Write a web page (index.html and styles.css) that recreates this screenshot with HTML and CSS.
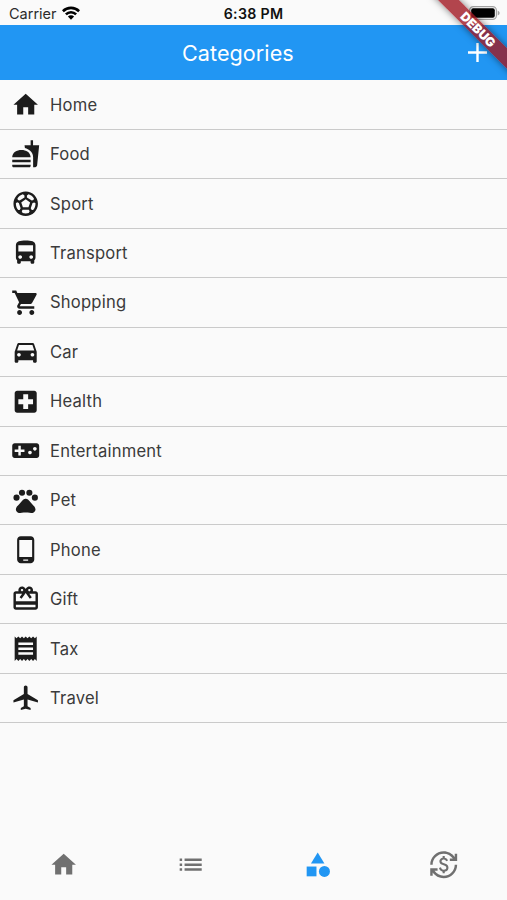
FILE: index.html
```html
<!DOCTYPE html>
<html lang="en">
<head>
<meta charset="utf-8">
<title>Categories</title>
<link rel="stylesheet" href="styles.css">
</head>
<body>
<div class="app">
  <div class="status">
    <div class="carrier"><span>Carrier</span>
      <svg class="wifi" viewBox="0 0 18 14"><g fill="none" stroke="#000" stroke-width="2.6"><path d="M.9 5.2a11.6 11.6 0 0 1 16.2 0"/><path d="M3.9 8.4a7.2 7.2 0 0 1 10.2 0"/></g><path d="M9 13.8 5.9 10.6a4.4 4.4 0 0 1 6.2 0z"/></svg>
    </div>
    <div class="time">6:38 PM</div>
    <svg class="battery" viewBox="0 0 31 14"><rect x=".6" y=".6" width="26.8" height="12.8" rx="3.8" fill="none" stroke="#a2a2a2" stroke-width="1.2"/><rect x="2.2" y="2.2" width="23.6" height="9.6" rx="2" fill="#000"/><path d="M28.7 4.4q2 1 2 2.6t-2 2.6z" fill="#a2a2a2"/></svg>
  </div>
  <header class="bar">
    <h1>Categories</h1>
    <svg class="add" viewBox="0 0 19 19"><path d="M9.5 0v19M0 9.5h19" stroke="#fff" stroke-width="2.4"/></svg>
  </header>
  <ul class="list">
    <li><svg viewBox="0 0 24 24"><path d="M10 20v-6h4v6h5v-8h3L12 3 2 12h3v8z"/></svg><span>Home</span></li>
    <li><svg viewBox="0 0 24 24"><path d="M18.06 22.99h1.66c.84 0 1.53-.64 1.63-1.46L23 5.05h-5V1h-1.97v4.05h-4.97l.3 2.34c1.71.47 3.31 1.32 4.27 2.26 1.44 1.42 2.43 2.89 2.43 5.29v8.05zM1 21.99V21h15.03v.99c0 .55-.45 1-1.01 1H2.01c-.56 0-1.01-.45-1.01-1zm15.03-7c0-8-15.03-8-15.03 0h15.03zM1.02 17h15v2h-15z"/></svg><span>Food</span></li>
    <li><svg viewBox="0 0 24 24"><path d="M12 2C6.48 2 2 6.48 2 12c0 5.52 4.48 10 10 10s10-4.48 10-10C22 6.48 17.52 2 12 2zm1 3.3l1.35-.95c1.82.56 3.37 1.76 4.38 3.34l-.39 1.34-1.35.46L13 6.9V5.3zm-3.35-.95L11 5.3v1.6L7.01 9.49l-1.35-.46-.39-1.34c1.01-1.57 2.56-2.77 4.38-3.34zM7.08 17.11l-1.14.1C4.73 15.81 4 13.99 4 12c0-.12.01-.23.02-.35l1-.73 1.38.48 1.46 4.34-.78 1.37zm7.42 2.48c-.79.26-1.63.41-2.5.41s-1.71-.15-2.5-.41l-.69-1.49.64-1.1h5.11l.64 1.11-.7 1.48zM14.27 15H9.73l-1.35-4.02L12 8.44l3.63 2.54L14.27 15zm3.79 2.21l-1.14-.1-.79-1.37 1.46-4.34 1.39-.47 1 .73c.01.11.02.22.02.34 0 1.99-.73 3.81-1.94 5.21z"/></svg><span>Sport</span></li>
    <li><svg viewBox="0 0 24 24"><path d="M4 16c0 .88.39 1.67 1 2.22V20c0 .55.45 1 1 1h1c.55 0 1-.45 1-1v-1h8v1c0 .55.45 1 1 1h1c.55 0 1-.45 1-1v-1.78c.61-.55 1-1.34 1-2.22V6c0-3.5-3.58-4-8-4s-8 .5-8 4v10zm3.5 1c-.83 0-1.5-.67-1.5-1.5S6.67 14 7.5 14s1.5.67 1.5 1.5S8.33 17 7.5 17zm9 0c-.83 0-1.5-.67-1.5-1.5s.67-1.5 1.5-1.5 1.5.67 1.5 1.5-.67 1.5-1.5 1.5zm1.5-6H6V6h12v5z"/></svg><span>Transport</span></li>
    <li><svg viewBox="0 0 24 24"><path d="M7 18c-1.1 0-1.99.9-1.99 2S5.9 22 7 22s2-.9 2-2-.9-2-2-2zM1 2v2h2l3.6 7.59-1.35 2.45c-.16.28-.25.61-.25.96 0 1.1.9 2 2 2h12v-2H7.42c-.14 0-.25-.11-.25-.25l.03-.12.9-1.63h7.45c.75 0 1.41-.41 1.75-1.03l3.58-6.49c.08-.14.12-.31.12-.48 0-.55-.45-1-1-1H5.21l-.94-2H1zm16 16c-1.1 0-1.99.9-1.99 2s.89 2 1.99 2 2-.9 2-2-.9-2-2-2z"/></svg><span>Shopping</span></li>
    <li><svg viewBox="0 0 24 24"><path d="M18.92 6.01C18.72 5.42 18.16 5 17.5 5h-11c-.66 0-1.21.42-1.42 1.01L3 12v8c0 .55.45 1 1 1h1c.55 0 1-.45 1-1v-1h12v1c0 .55.45 1 1 1h1c.55 0 1-.45 1-1v-8l-2.08-5.99zM6.5 16c-.83 0-1.5-.67-1.5-1.5S5.67 13 6.5 13s1.5.67 1.5 1.5S7.33 16 6.5 16zm11 0c-.83 0-1.5-.67-1.5-1.5s.67-1.5 1.5-1.5 1.5.67 1.5 1.5-.67 1.5-1.5 1.5zM5 11l1.5-4.5h11L19 11H5z"/></svg><span>Car</span></li>
    <li><svg viewBox="0 0 24 24"><path d="M19 3H5c-1.1 0-1.99.9-1.99 2L3 19c0 1.1.9 2 2 2h14c1.1 0 2-.9 2-2V5c0-1.1-.9-2-2-2zm-1 11h-4v4h-4v-4H6v-4h4V6h4v4h4v4z"/></svg><span>Health</span></li>
    <li><svg viewBox="0 0 24 24"><path d="M21 6H3c-1.1 0-2 .9-2 2v8c0 1.1.9 2 2 2h18c1.1 0 2-.9 2-2V8c0-1.1-.9-2-2-2zm-10 7H8v3H6v-3H3v-2h3V8h2v3h3v2zm4.5 2c-.83 0-1.5-.67-1.5-1.5s.67-1.5 1.5-1.5 1.5.67 1.5 1.5-.67 1.5-1.5 1.5zm4-3c-.83 0-1.5-.67-1.5-1.5S18.67 9 19.5 9s1.5.67 1.5 1.5-.67 1.5-1.5 1.5z"/></svg><span>Entertainment</span></li>
    <li><svg viewBox="0 0 24 24"><circle cx="4.5" cy="9.5" r="2.5"/><circle cx="9" cy="5.5" r="2.5"/><circle cx="15" cy="5.5" r="2.5"/><circle cx="19.5" cy="9.5" r="2.5"/><path d="M17.34 14.86c-.87-1.02-1.6-1.89-2.48-2.91-.46-.54-1.05-1.08-1.75-1.32-.11-.04-.22-.07-.33-.09-.25-.04-.52-.04-.78-.04s-.53 0-.79.05c-.11.02-.22.05-.33.09-.7.24-1.28.78-1.75 1.32-.87 1.02-1.6 1.89-2.48 2.91-1.31 1.31-2.92 2.76-2.62 4.79.29 1.02 1.02 2.03 2.33 2.32.73.15 3.06-.44 5.54-.44h.18c2.48 0 4.81.58 5.54.44 1.31-.29 2.04-1.31 2.33-2.32.31-2.04-1.3-3.49-2.61-4.8z"/></svg><span>Pet</span></li>
    <li><svg viewBox="0 0 24 24"><path d="M16 1H8C6.34 1 5 2.34 5 4v16c0 1.66 1.34 3 3 3h8c1.66 0 3-1.34 3-3V4c0-1.66-1.34-3-3-3zm-2 20h-4v-1h4v1zm3.25-3H6.75V4h10.5v14z"/></svg><span>Phone</span></li>
    <li><svg viewBox="0 0 24 24"><path d="M20 6h-2.18c.11-.31.18-.65.18-1 0-1.66-1.34-3-3-3-1.05 0-1.96.54-2.5 1.35l-.5.67-.5-.68C10.96 2.54 10.05 2 9 2 7.34 2 6 3.34 6 5c0 .35.07.69.18 1H4c-1.11 0-1.99.89-1.99 2L2 19c0 1.11.89 2 2 2h16c1.11 0 2-.89 2-2V8c0-1.11-.89-2-2-2zm-5-2c.55 0 1 .45 1 1s-.45 1-1 1-1-.45-1-1 .45-1 1-1zM9 4c.55 0 1 .45 1 1s-.45 1-1 1-1-.45-1-1 .45-1 1-1zm11 15H4v-2h16v2zm0-5H4V8h5.08L7 10.83 8.62 12 11 8.76l1-1.36 1 1.36L15.38 12 17 10.83 14.92 8H20v6z"/></svg><span>Gift</span></li>
    <li><svg viewBox="0 0 24 24"><path d="M18 17H6v-2h12v2zm0-4H6v-2h12v2zm0-4H6V7h12v2zM3 22l1.5-1.5L6 22l1.5-1.5L9 22l1.5-1.5L12 22l1.5-1.5L15 22l1.5-1.5L18 22l1.5-1.5L21 22V2l-1.5 1.5L18 2l-1.5 1.5L15 2l-1.5 1.5L12 2l-1.5 1.5L9 2 7.5 3.5 6 2 4.5 3.5 3 2v20z"/></svg><span>Tax</span></li>
    <li><svg viewBox="0 0 24 24"><path d="M22 16v-2l-8.5-5V3.5c0-.83-.67-1.5-1.5-1.5s-1.5.67-1.5 1.5V9L2 14v2l8.5-2.5V19L8 20.5V22l4-1 4 1v-1.5L13.5 19v-5.5L22 16z"/></svg><span>Travel</span></li>
  </ul>
  <nav class="tabs">
    <a><svg viewBox="0 0 24 24"><path d="M10 20v-6h4v6h5v-8h3L12 3 2 12h3v8z"/></svg></a>
    <a><svg viewBox="0 0 24 24"><path d="M3 13h2v-2H3v2zm0 4h2v-2H3v2zm0-8h2V7H3v2zm4 4h14v-2H7v2zm0 4h14v-2H7v2zM7 7v2h14V7H7z"/></svg></a>
    <a class="active"><svg viewBox="0 0 24 24"><path d="M12 2l-5.500 9h11z"/><circle cx="17.5" cy="17.5" r="4.5"/><path d="M3 13.5h8v8H3z"/></svg></a>
    <a><svg viewBox="0 0 24 24"><path d="M12.890 11.100c-1.780-.59-2.640-.96-2.640-1.900 0-1.020 1.110-1.390 1.810-1.390 1.310 0 1.790.99 1.900 1.340l1.580-.67c-.15-.44-.82-1.910-2.660-2.230V5h-1.750v1.260c-2.600.56-2.620 2.850-2.620 2.960 0 2.270 2.250 2.910 3.350 3.310 1.580.56 2.280 1.070 2.280 2.030 0 1.130-1.050 1.610-1.980 1.610-1.820 0-2.340-1.870-2.400-2.090L8.100 14.750c.63 2.190 2.280 2.780 3.020 2.960V19h1.750v-1.240c.52-.09 3.020-.59 3.020-3.220.01-1.390-.6-2.610-3-3.440zM3 21H1v-6h6v2H4.520c1.610 2.410 4.360 4 7.480 4 4.970 0 9-4.030 9-9h2c0 6.080-4.920 11-11 11-3.720 0-7.010-1.850-9-4.670V21zM1 12C1 5.920 5.920 1 12 1c3.720 0 7.010 1.850 9 4.670V3h2v6h-6V7h2.480C17.870 4.590 15.120 3 12 3c-4.970 0-9 4.030-9 9H1z"/></svg></a>
  </nav>
  <div class="ribbon"><span>DEBUG</span></div>
</div>
</body>
</html>
```
FILE: styles.css
```css
* { box-sizing: border-box; }
body { margin: 0; background: #fafafa; font-family: Inter, "Liberation Sans", sans-serif; }
.app { position: relative; display: flex; flex-direction: column; width: 507px; height: 900px; overflow: hidden; }
.status { flex: none; height: 25.4px; padding: 2px 7px 0 9px; display: grid; grid-template-columns: 1fr auto 1fr; align-items: center; color: #111; }
.carrier { display: flex; align-items: center; gap: 6px; font-size: 14.5px; color: #2b2b2b; }
.carrier .wifi { margin-left: -1px; }
.wifi { width: 18px; height: 14px; margin-top: -2px; }
.time { font-size: 14.2px; font-weight: 600; letter-spacing: .3px; margin-right: 2px; }
.battery { width: 31px; height: 14px; justify-self: end; margin-top: -2px; }
.bar { flex: none; height: 55px; padding: 0 20px 0 182px; display: flex; align-items: center; justify-content: space-between; background: #2196f3; color: #fff; }
.bar h1 { margin: 0; font-size: 21.6px; font-weight: 400; letter-spacing: .05px; }
.add { width: 19px; height: 19px; }
.list { flex: 1; margin: 0; padding: 0; list-style: none; }
.list li { height: 49.46px; padding-left: 10.6px; display: flex; align-items: center; gap: 10px; border-bottom: 1px solid #cacaca; font-size: 16.6px; letter-spacing: .2px; color: #3b3b3b; }
.list svg, .tabs svg { flex: none; width: 29.4px; height: 29.4px; fill: currentColor; }
.list svg { color: #1c1c1c; }
.tabs { flex: none; height: 72px; padding-top: 1px; display: grid; grid-template-columns: repeat(4, 1fr); align-items: center; color: #707070; }
.tabs a { display: flex; justify-content: center; padding-left: 1px; }
.tabs .active { color: #2196f3; }
.ribbon { position: absolute; left: 420px; top: 22px; width: 116px; height: 15px; display: flex; align-items: center; justify-content: center; transform: rotate(45deg); background: rgba(160, 24, 34, .8); box-shadow: 0 0 7px rgba(0, 0, 0, .5); color: #fff; font-size: 12.5px; font-weight: 900; }
```
